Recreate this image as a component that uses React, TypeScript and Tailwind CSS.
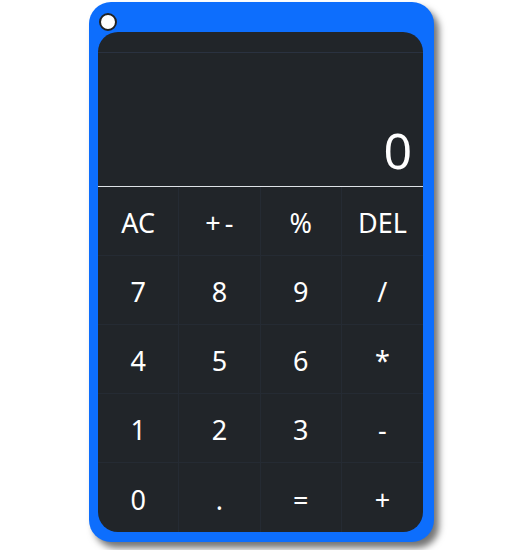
const rows = [
  ["AC", "+-", "%", "DEL"],
  ["7", "8", "9", "/"],
  ["4", "5", "6", "*"],
  ["1", "2", "3", "-"],
  ["0", ".", "=", "+"],
];

export default function App() {
  return (
    <div
      className="flex justify-center pt-[2px] bg-white h-[550px]"
      style={{ fontFamily: '"Noto Sans", "Open Sans", sans-serif' }}
    >
      <div className="w-[345px] h-[540px] bg-[#0d6efd] rounded-[22px] pl-[9px] pr-[11px] pt-[10px] pb-[10px] flex flex-col shadow-[5px_6px_7px_rgba(0,0,0,0.55)]">
        <div className="h-[20px] flex items-start">
          <div className="w-[18px] h-[18px] rounded-full bg-white border-2 border-[#222] ml-[1px] mt-[1px]" />
        </div>
        <div className="flex-1 bg-[#212529] rounded-[20px] flex flex-col overflow-hidden">
          <div className="h-[20px]" />
          <div className="h-[135px] border-t border-[#2a3240] border-b border-b-[#dee2e6] flex items-end justify-end pr-[11px]">
            <span className="text-white text-[50px] leading-none pb-[11px]">0</span>
          </div>
          <div className="flex-1 grid grid-cols-4 grid-rows-5">
            {rows.flat().map((k, i) => (
              <div
                key={i}
                className={
                  "flex items-center justify-center pt-[5px] text-white text-[27px] border-[#252b33] " +
                  (i % 4 !== 3 ? "border-r " : "") +
                  (i < 16 ? "border-b" : "")
                }
              >
                <span className={k === "+-" ? "tracking-[4px] pl-[4px]" : ""}>{k}</span>
              </div>
            ))}
          </div>
        </div>
      </div>
    </div>
  );
}
